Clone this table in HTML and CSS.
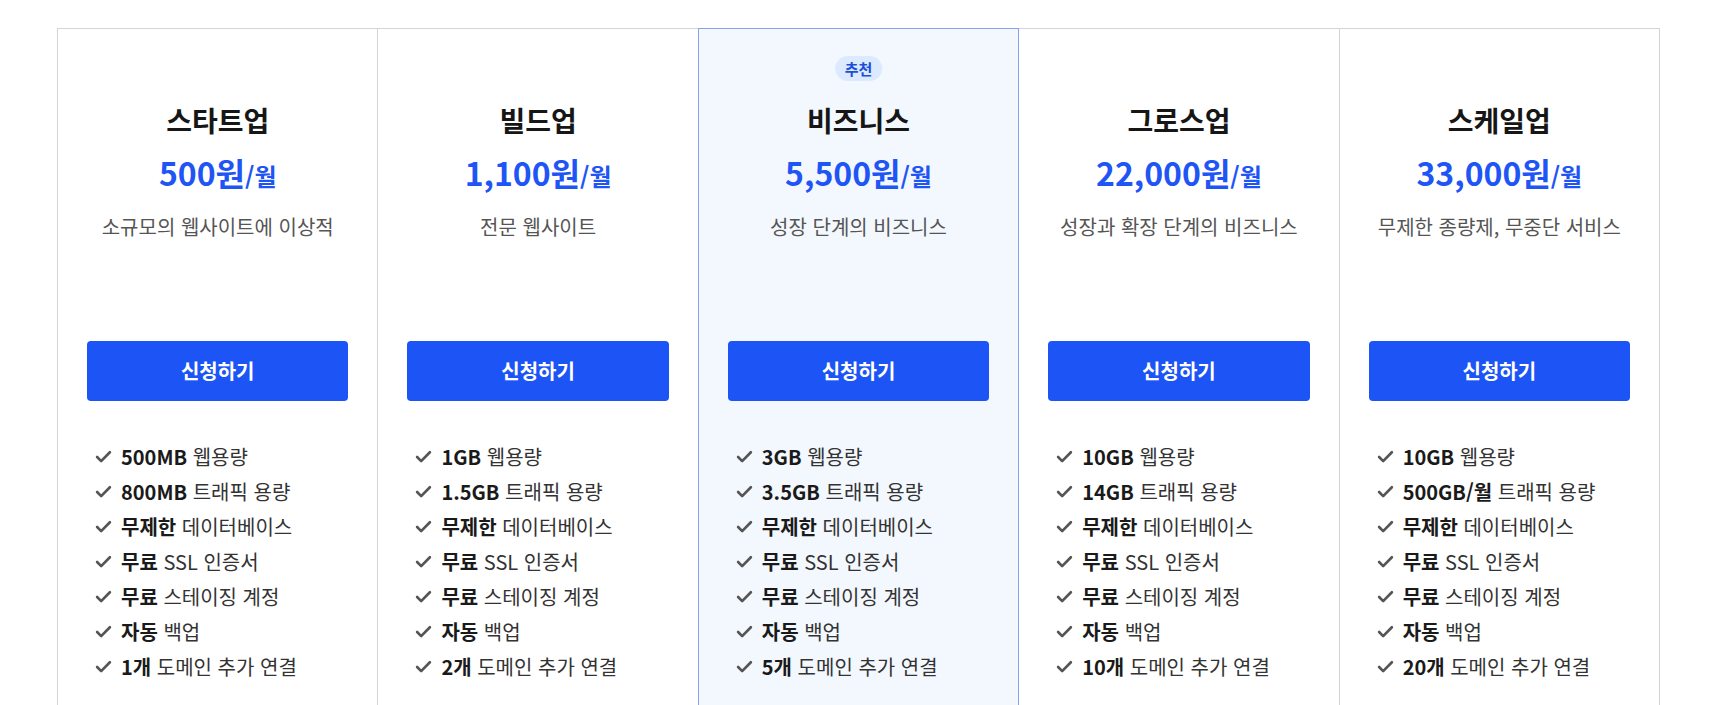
FILE: index.html
```html
<!DOCTYPE html>
<html lang="ko">
<head>
<meta charset="utf-8">
<title>요금제</title>
<link rel="stylesheet" href="styles.css">
</head>
<body>
<div class="pricing">
  <div class="plan">
    <div class="plan-head">
      <h2 class="plan-name">스타트업</h2>
      <div class="plan-price"><span class="amount">500원</span><span class="unit">/월</span></div>
      <p class="plan-desc">소규모의 웹사이트에 이상적</p>
    </div>
    <a class="plan-btn" href="#">신청하기</a>
    <ul class="features">
      <li><svg class="chk" viewBox="0 0 16 16"><path d="M2 8.5l3.8 3.8L14 4"/></svg><span><b>500MB</b> 웹용량</span></li>
      <li><svg class="chk" viewBox="0 0 16 16"><path d="M2 8.5l3.8 3.8L14 4"/></svg><span><b>800MB</b> 트래픽 용량</span></li>
      <li><svg class="chk" viewBox="0 0 16 16"><path d="M2 8.5l3.8 3.8L14 4"/></svg><span><b>무제한</b> 데이터베이스</span></li>
      <li><svg class="chk" viewBox="0 0 16 16"><path d="M2 8.5l3.8 3.8L14 4"/></svg><span><b>무료</b> SSL 인증서</span></li>
      <li><svg class="chk" viewBox="0 0 16 16"><path d="M2 8.5l3.8 3.8L14 4"/></svg><span><b>무료</b> 스테이징 계정</span></li>
      <li><svg class="chk" viewBox="0 0 16 16"><path d="M2 8.5l3.8 3.8L14 4"/></svg><span><b>자동</b> 백업</span></li>
      <li><svg class="chk" viewBox="0 0 16 16"><path d="M2 8.5l3.8 3.8L14 4"/></svg><span><b>1개</b> 도메인 추가 연결</span></li>
    </ul>
  </div>
  <div class="plan">
    <div class="plan-head">
      <h2 class="plan-name">빌드업</h2>
      <div class="plan-price"><span class="amount">1,100원</span><span class="unit">/월</span></div>
      <p class="plan-desc">전문 웹사이트</p>
    </div>
    <a class="plan-btn" href="#">신청하기</a>
    <ul class="features">
      <li><svg class="chk" viewBox="0 0 16 16"><path d="M2 8.5l3.8 3.8L14 4"/></svg><span><b>1GB</b> 웹용량</span></li>
      <li><svg class="chk" viewBox="0 0 16 16"><path d="M2 8.5l3.8 3.8L14 4"/></svg><span><b>1.5GB</b> 트래픽 용량</span></li>
      <li><svg class="chk" viewBox="0 0 16 16"><path d="M2 8.5l3.8 3.8L14 4"/></svg><span><b>무제한</b> 데이터베이스</span></li>
      <li><svg class="chk" viewBox="0 0 16 16"><path d="M2 8.5l3.8 3.8L14 4"/></svg><span><b>무료</b> SSL 인증서</span></li>
      <li><svg class="chk" viewBox="0 0 16 16"><path d="M2 8.5l3.8 3.8L14 4"/></svg><span><b>무료</b> 스테이징 계정</span></li>
      <li><svg class="chk" viewBox="0 0 16 16"><path d="M2 8.5l3.8 3.8L14 4"/></svg><span><b>자동</b> 백업</span></li>
      <li><svg class="chk" viewBox="0 0 16 16"><path d="M2 8.5l3.8 3.8L14 4"/></svg><span><b>2개</b> 도메인 추가 연결</span></li>
    </ul>
  </div>
  <div class="plan featured">
    <div class="plan-head">
      <span class="badge">추천</span>
      <h2 class="plan-name">비즈니스</h2>
      <div class="plan-price"><span class="amount">5,500원</span><span class="unit">/월</span></div>
      <p class="plan-desc">성장 단계의 비즈니스</p>
    </div>
    <a class="plan-btn" href="#">신청하기</a>
    <ul class="features">
      <li><svg class="chk" viewBox="0 0 16 16"><path d="M2 8.5l3.8 3.8L14 4"/></svg><span><b>3GB</b> 웹용량</span></li>
      <li><svg class="chk" viewBox="0 0 16 16"><path d="M2 8.5l3.8 3.8L14 4"/></svg><span><b>3.5GB</b> 트래픽 용량</span></li>
      <li><svg class="chk" viewBox="0 0 16 16"><path d="M2 8.5l3.8 3.8L14 4"/></svg><span><b>무제한</b> 데이터베이스</span></li>
      <li><svg class="chk" viewBox="0 0 16 16"><path d="M2 8.5l3.8 3.8L14 4"/></svg><span><b>무료</b> SSL 인증서</span></li>
      <li><svg class="chk" viewBox="0 0 16 16"><path d="M2 8.5l3.8 3.8L14 4"/></svg><span><b>무료</b> 스테이징 계정</span></li>
      <li><svg class="chk" viewBox="0 0 16 16"><path d="M2 8.5l3.8 3.8L14 4"/></svg><span><b>자동</b> 백업</span></li>
      <li><svg class="chk" viewBox="0 0 16 16"><path d="M2 8.5l3.8 3.8L14 4"/></svg><span><b>5개</b> 도메인 추가 연결</span></li>
    </ul>
  </div>
  <div class="plan">
    <div class="plan-head">
      <h2 class="plan-name">그로스업</h2>
      <div class="plan-price"><span class="amount">22,000원</span><span class="unit">/월</span></div>
      <p class="plan-desc">성장과 확장 단계의 비즈니스</p>
    </div>
    <a class="plan-btn" href="#">신청하기</a>
    <ul class="features">
      <li><svg class="chk" viewBox="0 0 16 16"><path d="M2 8.5l3.8 3.8L14 4"/></svg><span><b>10GB</b> 웹용량</span></li>
      <li><svg class="chk" viewBox="0 0 16 16"><path d="M2 8.5l3.8 3.8L14 4"/></svg><span><b>14GB</b> 트래픽 용량</span></li>
      <li><svg class="chk" viewBox="0 0 16 16"><path d="M2 8.5l3.8 3.8L14 4"/></svg><span><b>무제한</b> 데이터베이스</span></li>
      <li><svg class="chk" viewBox="0 0 16 16"><path d="M2 8.5l3.8 3.8L14 4"/></svg><span><b>무료</b> SSL 인증서</span></li>
      <li><svg class="chk" viewBox="0 0 16 16"><path d="M2 8.5l3.8 3.8L14 4"/></svg><span><b>무료</b> 스테이징 계정</span></li>
      <li><svg class="chk" viewBox="0 0 16 16"><path d="M2 8.5l3.8 3.8L14 4"/></svg><span><b>자동</b> 백업</span></li>
      <li><svg class="chk" viewBox="0 0 16 16"><path d="M2 8.5l3.8 3.8L14 4"/></svg><span><b>10개</b> 도메인 추가 연결</span></li>
    </ul>
  </div>
  <div class="plan">
    <div class="plan-head">
      <h2 class="plan-name">스케일업</h2>
      <div class="plan-price"><span class="amount">33,000원</span><span class="unit">/월</span></div>
      <p class="plan-desc">무제한 종량제, 무중단 서비스</p>
    </div>
    <a class="plan-btn" href="#">신청하기</a>
    <ul class="features">
      <li><svg class="chk" viewBox="0 0 16 16"><path d="M2 8.5l3.8 3.8L14 4"/></svg><span><b>10GB</b> 웹용량</span></li>
      <li><svg class="chk" viewBox="0 0 16 16"><path d="M2 8.5l3.8 3.8L14 4"/></svg><span><b>500GB/월</b> 트래픽 용량</span></li>
      <li><svg class="chk" viewBox="0 0 16 16"><path d="M2 8.5l3.8 3.8L14 4"/></svg><span><b>무제한</b> 데이터베이스</span></li>
      <li><svg class="chk" viewBox="0 0 16 16"><path d="M2 8.5l3.8 3.8L14 4"/></svg><span><b>무료</b> SSL 인증서</span></li>
      <li><svg class="chk" viewBox="0 0 16 16"><path d="M2 8.5l3.8 3.8L14 4"/></svg><span><b>무료</b> 스테이징 계정</span></li>
      <li><svg class="chk" viewBox="0 0 16 16"><path d="M2 8.5l3.8 3.8L14 4"/></svg><span><b>자동</b> 백업</span></li>
      <li><svg class="chk" viewBox="0 0 16 16"><path d="M2 8.5l3.8 3.8L14 4"/></svg><span><b>20개</b> 도메인 추가 연결</span></li>
    </ul>
  </div>
</div>
</body>
</html>
```
FILE: styles.css
```css
html, body {
  margin: 0;
  padding: 0;
  background: #ffffff;
}
body {
  font-family: "Noto Sans CJK KR", "Noto Sans", sans-serif;
  color: #222;
}
.pricing {
  display: flex;
  width: 1603px;
  margin: 28px 0 0 57px;
}
.plan {
  flex: 1 1 0;
  min-width: 0;
  border: 1px solid #d4d4d4;
  margin-left: -1px;
  padding: 0 29px 60px;
  background: #fff;
  display: flex;
  flex-direction: column;
  position: relative;
}
.plan:first-child {
  margin-left: 0;
}
.plan.featured {
  border-color: #86a3ee;
  background: #f3f8fe;
  z-index: 1;
}
.plan-head {
  position: relative;
  height: 312px;
  padding-top: 73px;
  box-sizing: border-box;
  text-align: center;
}
.badge {
  position: absolute;
  top: 27px;
  left: 50%;
  transform: translateX(-50%);
  background: #dbeafe;
  color: #1d4ed8;
  font-size: 15px;
  font-weight: 700;
  line-height: 25px;
  padding: 0 10px;
  border-radius: 13px;
  white-space: nowrap;
}
.plan-name {
  margin: 0;
  font-size: 28px;
  line-height: 36px;
  font-weight: 700;
  color: #161616;
}
.plan-price {
  margin-top: 14px;
  line-height: 40px;
  color: #1f55f5;
  font-weight: 700;
  white-space: nowrap;
}
.amount {
  font-size: 32px;
}
.unit {
  font-size: 24px;
}
.plan-desc {
  margin: 14px 0 0;
  font-size: 20px;
  line-height: 28px;
  color: #555;
}
.plan-btn {
  display: block;
  height: 60px;
  line-height: 60px;
  border-radius: 4px;
  background: #1c54f5;
  color: #fff;
  text-align: center;
  font-size: 20px;
  font-weight: 700;
  text-decoration: none;
}
.features {
  list-style: none;
  margin: 38px 0 0;
  padding: 0 0 0 8px;
}
.features li {
  display: flex;
  align-items: center;
  height: 35px;
  font-size: 20px;
  color: #333;
  white-space: nowrap;
}
.features b {
  font-weight: 700;
  color: #1a1a1a;
}
.chk {
  width: 17px;
  height: 17px;
  margin-right: 9px;
  flex: none;
  fill: none;
  stroke: #555;
  stroke-width: 2.5;
  stroke-linecap: round;
  stroke-linejoin: round;
}
```
